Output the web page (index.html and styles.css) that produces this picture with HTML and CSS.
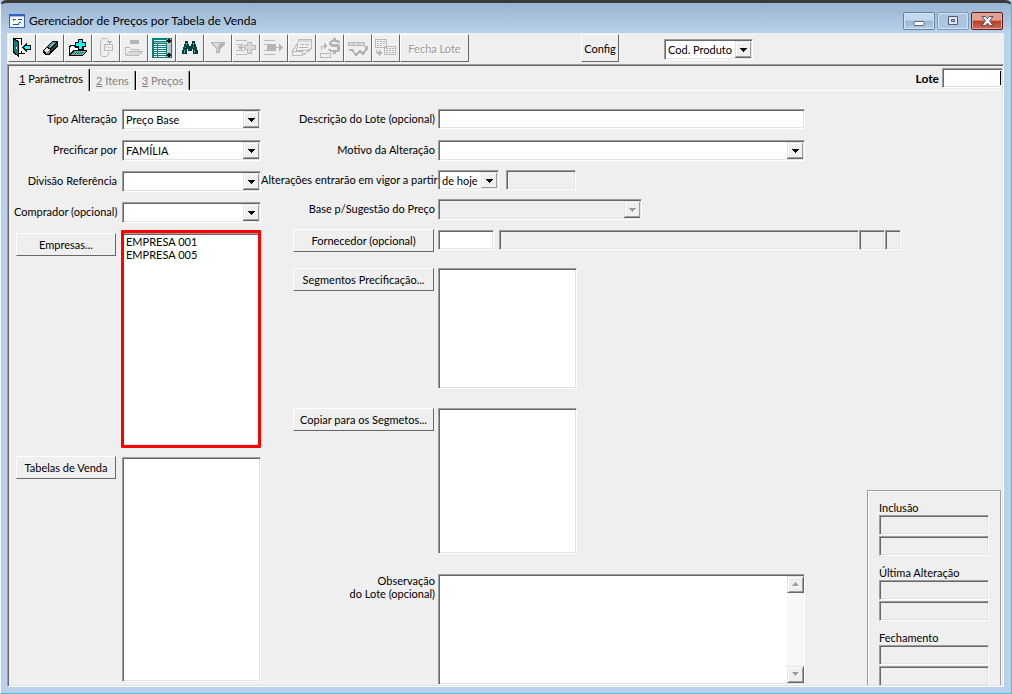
FILE: index.html
```html
<!DOCTYPE html>
<html lang="pt-BR">
<head>
<meta charset="utf-8">
<title>Gerenciador de Preços por Tabela de Venda</title>
<link rel="stylesheet" href="styles.css">
</head>
<body>
<div class="window">
  <header class="titlebar">
    <svg class="app-icon" width="16" height="14" viewBox="0 0 16 14" shape-rendering="crispEdges"><rect x="0" y="0" width="16" height="14" fill="#2f62b8"/><path d="M1 2h14v11H1z" fill="#f4f8ff"/><path d="M1 2h14v1H1z" fill="#9cc0f0"/><path d="M3 6h1v-1h3v1H5v1H4zM9 5h4v1H9zM4 10h5v-1h1v2H4zM10 8h2v1h-2z" fill="#2458b0"/></svg>
    <h1 class="title">Gerenciador de Preços por Tabela de Venda</h1>
    <div class="caption-buttons">
      <button class="caption" aria-label="Minimizar"><svg width="12" height="12" viewBox="0 0 12 12"><rect x="1" y="6.500" width="10" height="4" rx="1" fill="#fff" stroke="#5d6670"/></svg></button>
      <button class="caption caption-max" aria-label="Maximizar"><svg width="12" height="12" viewBox="0 0 12 12"><path d="M1.500 1.500h9v8h-9zM4.500 4.500v2h3v-2z" fill="#dfe6ee" fill-rule="evenodd" stroke="#535a70"/></svg></button>
      <button class="caption caption-close" aria-label="Fechar"><svg width="13" height="12" viewBox="0 0 13 12"><path d="M1 1.500h3.500l2 2.200 2-2.200H12L8.700 5.800 12 10.500H8.500l-2-2.300-2 2.300H1l3.300-4.700z" fill="#f4f4f8" stroke="#4a4e68"/></svg></button>
    </div>
  </header>

  <div class="toolbar">
    <button class="tool" aria-label="Sair"><svg viewBox="1 1 26 26"><path d="M5 4h9v7h-1V5H5zM13 17h1v2h3v1h-7v-1h3z" fill="#000"/><path d="M11 5h2v14h-2z" fill="#fff"/><path d="M5 4l6 3v16l-6-4z" fill="#000"/><path d="M6 6l4 2v13l-4-3z" fill="#008080"/><path d="M8 13h1v2H8z" fill="#fff"/><path d="M14 13l5-5v3h4v5h-4v3z" fill="#000"/><path d="M15.500 13.500L18 11v1h4v3h-4v1z" fill="#00ffff"/></svg></button>
    <button class="tool" aria-label="Limpar"><svg viewBox="1 1 26 26"><path d="M16 7h5l1 1v4l-9 9H9l-2-2v-3z" fill="#000"/><path d="M16 8h4l-6 6-3-1z" fill="#3d9a9a"/><path d="M21 9v2l-6 6v-2z" fill="#006060"/><path d="M10 14l4 1-4 4-2-2z" fill="#e6e6e6"/><path d="M14 15v3l-2 2h-2z" fill="#808080"/><path d="M17 9h2l-5 4h-1z" fill="#a8d4d4"/><path d="M4 21h2v1H4zM7 22h9v1H7zM18 21h2v1h-2zM21 22h1v1h-1z" fill="#fff"/></svg></button>
    <button class="tool" aria-label="Novo lote"><svg viewBox="1 1 26 26"><path d="M5 12l2-1h4l1 2h8v3h3v1l-4 5H5z" fill="#000"/><path d="M6 13l1-1h3l1 2h8v2H9l-3 4z" fill="#fff"/><path d="M10 17h12l-4 4H7z" fill="#76aaaa"/><path d="M10 18h1v1h-1zM12 18h1v1h-1zM14 18h1v1h-1zM16 18h1v1h-1zM18 18h1v1h-1zM9 19h1v1H9zM11 19h1v1h-1zM13 19h1v1h-1zM15 19h1v1h-1zM17 19h1v1h-1z" fill="#008080"/><path d="M14 5h5v3h3v5h-3v3h-5v-3h-3V8h3z" fill="#000"/><path d="M15 6h3v3h3v3h-3v3h-3v-3h-3V9h3z" fill="#00ffff"/></svg></button>
    <button class="tool" disabled aria-label="Reabrir"><svg viewBox="1 1 26 26"><path d="M16.500 8V6.500l-2-2h-4l-2 3v13l2 2h4l2-2v-3M12.500 10.500h8v6h-8z" class="off-line"/><path d="M14 7h6l-3 3zM14 13h1v1h-1zM16 13h1v1h-1zM18 13h1v1h-1z" class="off"/></svg></button>
    <button class="tool" disabled aria-label="Abrir"><svg viewBox="1 1 26 26"><path d="M10 6h9v4h-9z" class="off"/><path d="M10 18h11l-3 3H8z" class="off-soft"/><path d="M5.500 20.500v-7h4l2 2h7v2M5.500 21.500h13l4-4H9.500l-4 4" class="off-line"/></svg></button>
    <button class="tool" aria-label="Planilha"><svg viewBox="1 1 26 26"><path d="M4 4h20v20H4z" fill="#008080"/><path d="M6 6h12v1H6zM6 10h3v1H6zM10 10h8v1h-8zM6 12h3v1H6zM10 12h8v1h-8zM6 14h3v1H6zM10 14h8v1h-8zM6 16h3v1H6zM10 16h8v1h-8zM6 18h3v1H6zM10 18h8v1h-8zM6 20h3v1H6zM10 20h8v1h-8zM6 22h3v1H6zM10 22h8v1h-8z" fill="#fff"/><path d="M6 8h13v1H6z" fill="#7fb8b8"/><path d="M19 5h4v18h-4z" fill="#b8c4c4"/><path d="M20 5h2v1h1v2h-1v1h-2V8h-1V6h1zM20 19h2v1h1v2h-1v1h-2v-1h-1v-2h1z" fill="#000"/></svg></button>
    <button class="tool" aria-label="Pesquisar"><svg viewBox="1 1 26 26"><path d="M9 7h3v3h1v2h2v-2h1V7h3v3h1v3h1v3h1v4h-5v-5h-1v2h-4v-2h-1v5H6v-4h1v-3h1v-3h1z" fill="#00403f"/><path d="M10 9h1v2h-1zM17 9h1v2h-1zM8 16h1v3H8zM18 16h1v3h-1zM9 13h1v1H9zM17 13h1v1h-1z" fill="#6fa0a0"/></svg></button>
    <button class="tool" disabled aria-label="Filtrar"><svg viewBox="1 1 26 26"><path d="M7 8h14v2l-5 5v4h-4v-4L7 10z" class="off"/><path d="M9 9h7l-2 4v5h-1v-4z" fill="#dedede"/></svg></button>
    <button class="tool" disabled aria-label="Inserir itens"><svg viewBox="1 1 26 26"><path d="M4 6.500h11M4 10.500h8M4 20.500h11M4 16.500h8M7 13.500h6" class="off-line"/><path d="M6 13.500l4-3v6z" class="off"/><path d="M15.500 8.500h4v3h4v4h-4v4h-4v-4h-3v-4h3z" class="off-line off-soft"/></svg></button>
    <button class="tool" disabled aria-label="Remover itens"><svg viewBox="1 1 26 26"><path d="M4 6.500h11M4 10.500h4M4 16.500h4M4 20.500h11M16 13.500h5" class="off-line"/><path d="M7 10h9v7H7zM19 10l4 3.500-4 3.500z" class="off"/></svg></button>
    <button class="tool" disabled aria-label="Etiquetas"><svg viewBox="1 1 26 26"><path d="M10.500 5.500h13v9l-4 2h-11zM4.500 17.500h10v4h-10zM4.500 17l5-8M14.500 21.500l8-6" class="off-line"/><path d="M11 6h12v2H11z" class="off-soft"/><path d="M12 10h4v1h-4zM17 10h4v1h-4zM11 13h9v1h-9z" class="off"/></svg></button>
    <button class="tool" disabled aria-label="Preços"><svg viewBox="1 1 26 26"><path d="M5.500 16v-4h4M4.500 19.500h10v4h-10z" class="off-line"/><path d="M8 9l4 3-4 3zM17 4h3v2h3l1 2v1h-3V8h-5v2h6l2 2v4l-2 2h-2v2h-3v-2h-3l-2-2v-1h3v1h6v-3h-6l-2-2V8l2-2h2z" class="off"/></svg></button>
    <button class="tool" disabled aria-label="Tendência"><svg viewBox="1 1 26 26"><path d="M4.500 8.500h16v3h-16zM9.500 8v4M14.500 8v4" class="off-line off-soft"/><path d="M5 16h3l4 5 4-4 3 3 4-6" class="off-trend"/><path d="M19 12h5v5z" class="off"/></svg></button>
    <button class="tool" disabled aria-label="Copiar tabela"><svg viewBox="1 1 26 26"><path d="M3.500 5.500h11v8h-11zM12.500 12.500h11v8h-11z" class="off-line"/><path d="M5 7h2v1H5zM8 7h2v1H8zM11 7h2v1h-2zM5 9h2v1H5zM8 9h2v1H8zM11 9h2v1h-2zM5 11h2v1H5zM8 11h2v1H8zM14 14h2v1h-2zM17 14h2v1h-2zM20 14h2v1h-2zM14 16h2v1h-2zM17 16h2v1h-2zM20 16h2v1h-2zM14 18h2v1h-2zM17 18h2v1h-2zM20 18h2v1h-2z" class="off"/><path d="M4 16h1v2h2v-2l3 3-3 3v-2H5l-1-1z" class="off"/></svg></button>
    <button class="tool tool-text" disabled>Fecha Lote</button>
    <button class="tool tool-config">Config</button>
    <select class="field combo combo-code" aria-label="Pesquisar por"><option>Cod. Produto</option></select>
  </div>

  <main class="panel">
    <div class="tab-row">
      <div class="tabs" role="tablist">
        <button class="tab tab-active" role="tab" aria-selected="true"><u>1</u> Parâmetros</button>
        <button class="tab" role="tab" aria-selected="false"><u>2</u> Itens</button>
        <button class="tab" role="tab" aria-selected="false"><u>3</u> Preços</button>
      </div>
      <div class="lote">
        <label for="lote">Lote</label>
        <span class="field lote-box"><input id="lote" type="text"><i class="lote-edge"></i></span>
      </div>
    </div>

    <div class="page">
      <section class="left">
        <label for="tipo">Tipo Alteração</label>
        <select id="tipo" class="field combo"><option>Preço Base</option></select>
        <label for="precificar">Precificar por</label>
        <select id="precificar" class="field combo"><option>FAMÍLIA</option></select>
        <label for="divisao">Divisão Referência</label>
        <select id="divisao" class="field combo"><option></option></select>
        <label for="comprador">Comprador (opcional)</label>
        <select id="comprador" class="field combo"><option></option></select>
        <button class="push">Empresas...</button>
        <div class="highlight">
          <ul class="field list" aria-label="Empresas"><li>EMPRESA 001</li><li>EMPRESA 005</li></ul>
        </div>
        <button class="push">Tabelas de Venda</button>
        <ul class="field list" aria-label="Tabelas de Venda"></ul>
      </section>

      <section class="right">
        <label for="descricao">Descrição do Lote (opcional)</label>
        <input id="descricao" class="field" type="text">
        <label for="motivo">Motivo da Alteração</label>
        <select id="motivo" class="field combo"><option></option></select>
        <label for="vigor">Alterações entrarão em vigor a partir</label>
        <div class="line">
          <select id="vigor" class="field combo combo-day"><option>de hoje</option></select>
          <input class="field date" type="text" disabled aria-label="Data">
        </div>
        <label for="base">Base p/Sugestão do Preço</label>
        <select id="base" class="field combo combo-base" disabled><option></option></select>
        <button class="push">Fornecedor (opcional)</button>
        <div class="line supplier">
          <input class="field supplier-code" type="text" aria-label="Código do fornecedor">
          <div class="supplier-info">
            <input class="field supplier-name" type="text" disabled aria-label="Nome do fornecedor">
            <input class="field supplier-state" type="text" disabled aria-label="UF">
            <input class="field supplier-flag" type="text" disabled aria-label="Tipo">
          </div>
        </div>
        <button class="push">Segmentos Precificação...</button>
        <ul class="field list segments" aria-label="Segmentos Precificação"></ul>
        <button class="push">Copiar para os Segmetos...</button>
        <ul class="field list segments segments-copy" aria-label="Copiar para os Segmetos"></ul>
        <label class="note-label" for="obs">Observação<br>do Lote (opcional)</label>
        <div class="field note">
          <textarea id="obs"></textarea>
          <div class="scroll">
            <button aria-label="Rolar para cima"><svg width="8" height="5" viewBox="0 0 8 5"><path d="M1 5h7L4.500 1z" fill="#fff"/><path d="M0 4h7L3.500 0z" fill="#9b9b9b"/></svg></button>
            <button aria-label="Rolar para baixo"><svg width="8" height="5" viewBox="0 0 8 5"><path d="M1 1h7L4.500 5z" fill="#fff"/><path d="M0 0h7L3.500 4z" fill="#9b9b9b"/></svg></button>
          </div>
        </div>
        <aside class="audit">
          <div class="audit-group"><span>Inclusão</span><input class="field" disabled aria-label="Usuário da inclusão"><input class="field" disabled aria-label="Data da inclusão"></div>
          <div class="audit-group"><span>Última Alteração</span><input class="field" disabled aria-label="Usuário da alteração"><input class="field" disabled aria-label="Data da alteração"></div>
          <div class="audit-group"><span>Fechamento</span><input class="field" disabled aria-label="Usuário do fechamento"><input class="field" disabled aria-label="Data do fechamento"></div>
        </aside>
      </section>
    </div>
  </main>
</div>
</body>
</html>
```
FILE: styles.css
```css
* { box-sizing: border-box; }

:root {
  --face: #efefef;
  --dark: #686868;
  --shade: #9d9d9d;
  --light: #e3e3e3;
}

body {
  margin: 0;
  background: #b9d1ea;
  color: #000;
  font: 11px/13px Lato, Roboto, "Liberation Sans", sans-serif;
}

button, input, select, textarea {
  font: inherit;
  color: inherit;
  margin: 0;
  border-radius: 0;
  appearance: none;
  min-width: 0;
}

.window {
  display: flex;
  flex-direction: column;
  height: 100vh;
  min-height: 690px;
  padding: 0 7px 6px 6px;
  border: solid #fff;
  border-width: 3px 1px 1px;
  border-color: #3a3a3a #3cc0dc #3cc0dc #f4f8fc;
  border-top-left-radius: 6px;
  border-top-right-radius: 6px;
  background: linear-gradient(#99b4d1, #b9d1ea 30px);
}

/* Title bar */
.titlebar {
  display: flex;
  align-items: center;
  flex: none;
  height: 30px;
  padding: 6px 1px 0 2px;
  gap: 4px;
}

.title {
  flex: 1;
  margin: 0;
  font-size: 12px;
  font-weight: normal;
  line-height: 16px;
}

.caption-buttons { display: flex; gap: 2px; }

.caption {
  display: flex;
  align-items: center;
  justify-content: center;
  width: 32px;
  height: 18px;
  padding: 0;
  border: 1px solid #66809f;
  border-radius: 2px;
  background: linear-gradient(#c3d7ed 45%, #9ab6d4 50%, #b5cfe9);
  box-shadow: inset 0 0 0 1px #d5e4f3;
}

.caption-max { border-color: #8099b8; background: #acc5e1; }

.caption-close {
  border-color: #5c1e1e;
  background: linear-gradient(#e3a090 45%, #b83c25 50%, #d06b50);
  box-shadow: inset 0 0 0 1px #e0a598;
}

/* Toolbar */
.toolbar {
  display: flex;
  flex: none;
  height: 31px;
  padding: 1px 0 2px 1px;
  background: var(--face);
}

.tool {
  flex: none;
  width: 28px;
  height: 28px;
  padding: 0;
  border: 1px solid;
  border-color: #fff var(--dark) var(--dark) #fff;
  background: var(--face);
}

.tool svg { display: block; width: 26px; height: 26px; shape-rendering: crispEdges; }
.tool:disabled { color: #999; text-shadow: 1px 1px #fff; }
.off { fill: #b5b5b5; }
.off-soft { fill: #dadada; }
.off-line { fill: none; stroke: #bababa; stroke-width: 1; }
.off-line.off-soft { fill: #dadada; }
.off-trend { fill: none; stroke: #b0b0b0; stroke-width: 2; }
.tool-text { width: 69px; }
.tool-config { width: 38px; margin-left: 112px; }

/* Sunken fields */
.field {
  width: 100%;
  height: 20px;
  padding: 0 2px;
  border: 1px solid;
  border-color: var(--shade) #fff #fff var(--shade);
  background-color: #fff;
  box-shadow: inset 1px 1px var(--dark), inset -1px -1px var(--light);
}

.field:disabled { background-color: var(--face); }

.combo {
  height: 21px;
  padding: 0 17px 0 3px;
  background-repeat: no-repeat;
  background-position: right center;
  background-image: url("data:image/svg+xml,%3Csvg xmlns='http://www.w3.org/2000/svg' width='17' height='17' shape-rendering='crispEdges'%3E%3Cpath fill='%23686868' d='M0 0h17v17H0z'/%3E%3Cpath fill='%23e3e3e3' d='M0 0h16v16H0z'/%3E%3Cpath fill='%239d9d9d' d='M1 1h15v15H1z'/%3E%3Cpath fill='%23fff' d='M1 1h14v14H1z'/%3E%3Cpath fill='%23efefef' d='M2 2h13v13H2z'/%3E%3Cpath d='M5 7h7v1H5zM6 8h5v1H6zM7 9h3v1H7zM8 10h1v1H8z'/%3E%3C/svg%3E");
}

.combo:disabled {
  opacity: 1;
  background-image: url("data:image/svg+xml,%3Csvg xmlns='http://www.w3.org/2000/svg' width='17' height='17' shape-rendering='crispEdges'%3E%3Cpath fill='%23686868' d='M0 0h17v17H0z'/%3E%3Cpath fill='%23e3e3e3' d='M0 0h16v16H0z'/%3E%3Cpath fill='%239d9d9d' d='M1 1h15v15H1z'/%3E%3Cpath fill='%23fff' d='M1 1h14v14H1z'/%3E%3Cpath fill='%23efefef' d='M2 2h13v13H2z'/%3E%3Cpath fill='%23fff' d='M6 8h7v1H6zM7 9h5v1H7zM8 10h3v1H8z'/%3E%3Cpath fill='%239d9d9d' d='M5 7h7v1H5zM6 8h5v1H6zM7 9h3v1H7zM8 10h1v1H8z'/%3E%3C/svg%3E");
}

.combo-code { width: 89px; margin: 5px 0 0 45px; }

.list {
  height: 100%;
  margin: 0;
  padding: 1px 3px;
  list-style: none;
}

.push {
  width: 100%;
  height: 23px;
  padding: 0;
  border: 1px solid;
  border-color: #fff var(--dark) var(--dark) #fff;
  background: var(--face);
}

/* Panel and tabs */
.panel {
  display: flex;
  flex: 1;
  flex-direction: column;
  min-height: 0;
  border: 1px solid;
  border-color: var(--shade) #fff #fff var(--shade);
  background: var(--face);
  box-shadow: inset 1px 1px var(--dark), inset -1px -1px var(--light);
}

.tab-row {
  display: flex;
  flex: none;
  align-items: flex-end;
  justify-content: space-between;
  height: 26px;
  margin: 0 1px;
  background: linear-gradient(#fff, #fff) bottom / 100% 1px no-repeat;
}

.tabs { display: flex; align-items: flex-end; }

.tab {
  height: 20px;
  padding: 0 6px 0 5px;
  border: solid;
  border-width: 1px 1px 0;
  border-color: #fff #000 #fff #fff;
  border-top-right-radius: 2px;
  background: var(--face);
  box-shadow: inset -1px 0 var(--shade);
  color: #808080;
  margin-bottom: 1px;
}

.tab-active {
  height: 23px;
  margin-bottom: 0;
  padding: 0 6px 4px 9px;
  color: #000;
}

.lote {
  display: flex;
  align-items: center;
  align-self: flex-start;
  gap: 3px;
  padding-top: 3px;
  font-weight: bold;
  font-size: 12px;
}

.lote-box { display: flex; width: 60px; padding: 2px 1px 2px 2px; border-right: 0; }
.lote-box input { flex: 1; width: 100%; padding: 0; border: 0; background: none; }
.lote-edge { width: 1px; background: #000; }

/* Form */
.page {
  display: flex;
  flex: 1;
  min-height: 0;
  padding: 18px 2px 1px 6px;
}

.left {
  display: grid;
  flex: none;
  grid-template-columns: 103px 139px;
  grid-template-rows: repeat(4, 21px) 213px minmax(100px, 1fr);
  column-gap: 5px;
  row-gap: 10px;
  padding-bottom: 3px;
}

.left label, .right label { text-align: right; white-space: nowrap; }
.left > label { padding-top: 3px; }
.left > .list { margin-top: 1px; height: auto; }
.left > .push { width: 100px; margin-left: 2px; }

.highlight { position: relative; }

.highlight::after {
  content: "";
  position: absolute;
  inset: -3px 0 -2px -1px;
  border: 3px solid #f00;
  border-radius: 1px;
  pointer-events: none;
}

.right {
  display: grid;
  flex: 1;
  grid-template-columns: 174px minmax(200px, 1fr) 193px;
  grid-template-rows: 22px 21px 20px 21px 30px 131px 157px minmax(80px, 1fr);
  row-gap: 9px;
  column-gap: 3px;
  align-items: start;
  min-width: 0;
}

.right > label { padding-top: 3px; }
.right > label, .right > .push { grid-column: 1; }
.right > .field, .right > .line { grid-column: 2; }
.right > .push { width: 141px; margin-right: 1px; justify-self: end; }

.line { display: flex; align-items: center; }
.line .combo { height: 20px; }
.combo-day { width: 61px; margin-right: 7px; }
.date { width: 70px; }
.combo-base { width: 204px; }
.right > .supplier { grid-column: 2 / 4; height: 22px; padding-right: 100px; gap: 5px; }
.supplier-code { width: 56px; flex: none; }
.supplier-info { display: flex; flex: 1; }
.supplier-name { flex: 1; }
.supplier-state { width: 26px; }
.supplier-flag { width: 16px; }

.segments { width: 139px; height: 121px; }
.segments-copy { height: 146px; }

.right > .note-label { padding-top: 0; }

.note { display: flex; align-self: stretch; height: auto; padding: 1px 0 1px 1px; }
.note textarea { flex: 1; border: 0; padding: 1px 2px; background: none; resize: none; outline: 0; }

.scroll {
  display: flex;
  flex-direction: column;
  justify-content: space-between;
  width: 17px;
  background: #f7f7f7;
}

.scroll button {
  display: flex;
  align-items: center;
  justify-content: center;
  height: 17px;
  padding: 0;
  border: 1px solid;
  border-color: var(--light) var(--dark) var(--dark) var(--light);
  background: var(--face);
  box-shadow: inset 1px 1px #fff, inset -1px -1px var(--shade);
}

.audit {
  display: flex;
  flex-direction: column;
  grid-column: 3;
  grid-row: 7 / 9;
  align-self: stretch;
  justify-self: end;
  gap: 11px;
  width: 134px;
  min-height: 0;
  margin-top: 82px;
  padding: 11px 11px 0;
  overflow: hidden;
  border: 1px solid var(--shade);
  border-bottom: 0;
  box-shadow: inset 1px 1px #fff, 1px 0 #fff;
}

.audit-group { display: flex; flex: none; flex-direction: column; gap: 1px; line-height: 12px; }
```
